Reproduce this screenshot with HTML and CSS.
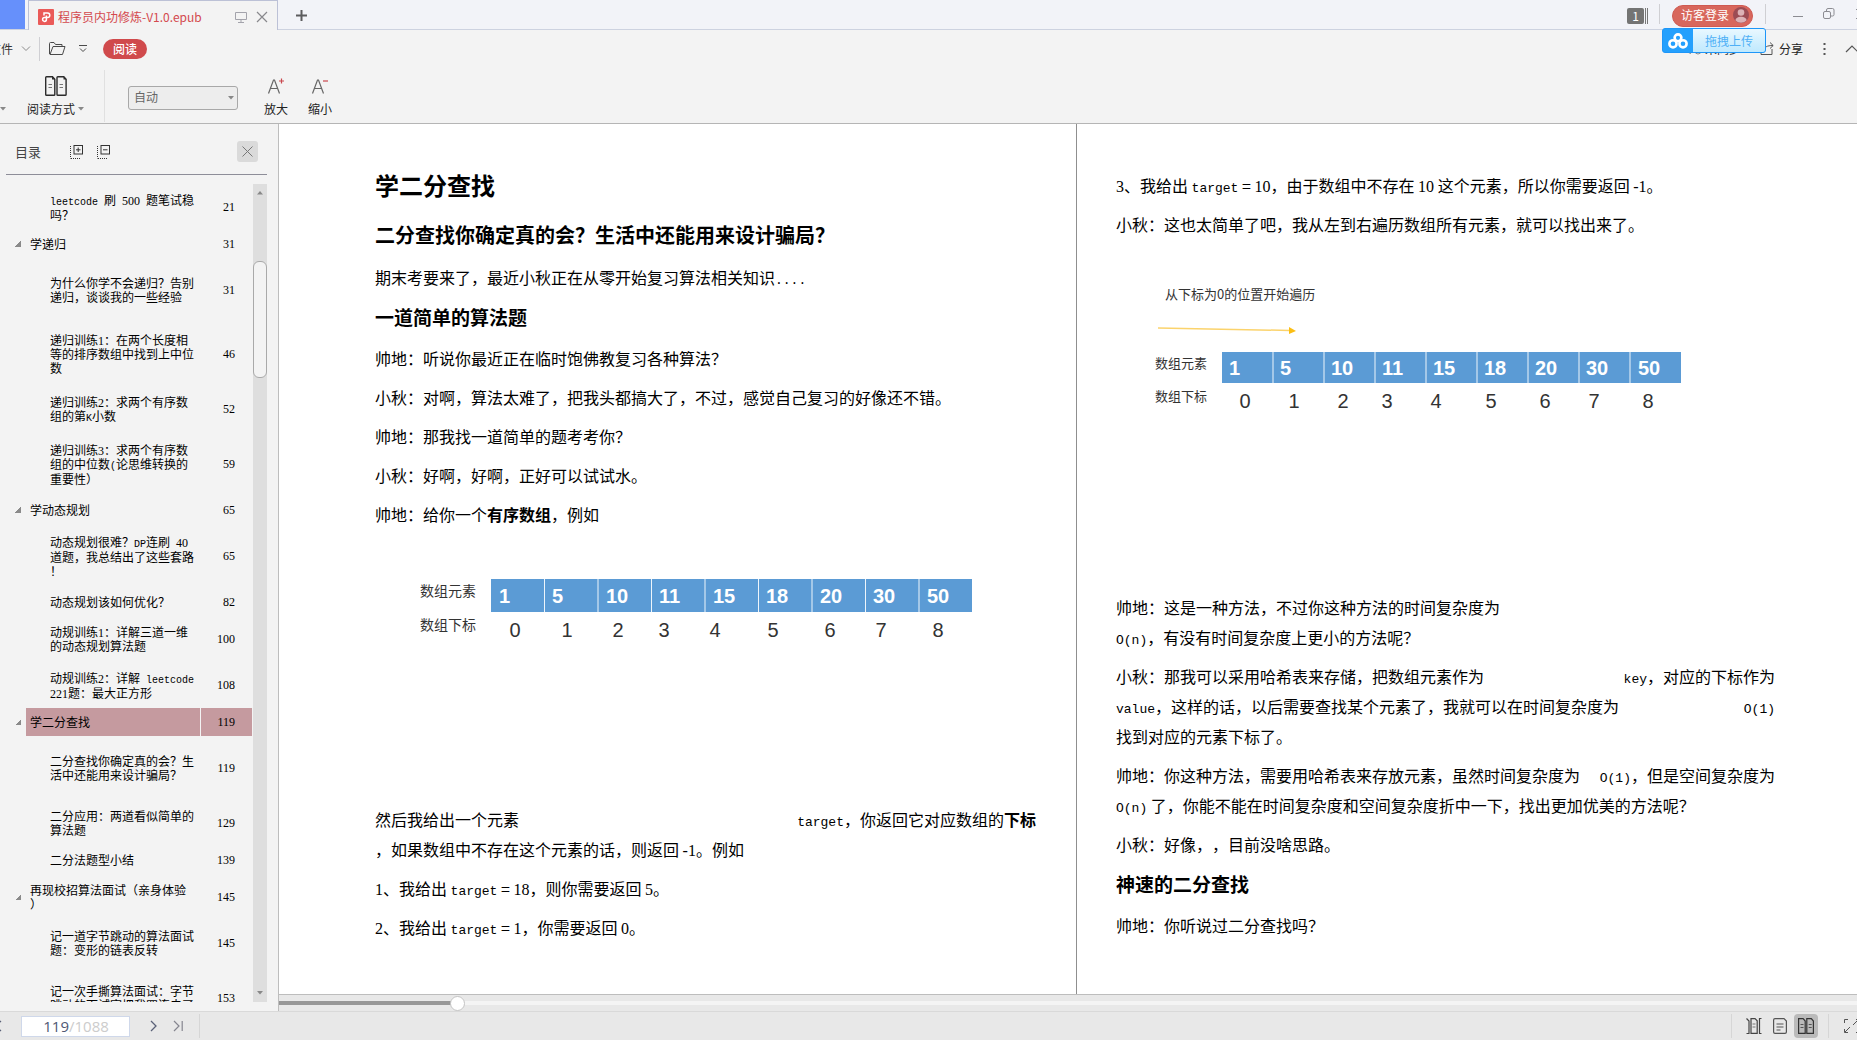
FILE: index.html
```html
<!DOCTYPE html>
<html lang="zh-CN">
<head>
<meta charset="utf-8">
<title>程序员内功修炼-V1.0.epub</title>
<link rel="stylesheet" href="styles.css">
</head>
<body>
<header class="titlebar">
  <div class="home-tab"></div>
  <div class="tab">
    <svg class="tab-logo" width="16" height="16" viewBox="0 0 16 16"><rect width="16" height="16" rx="1" fill="#ea5a58"/><path d="M6 6.500V4h3.500a2.300 2.300 0 1 1 0 4.600H6.500a1.900 1.900 0 1 0 1.900 1.900V6.500" fill="none" stroke="#fff" stroke-width="1.500"/></svg>
    <span class="tab-name">程序员内功修炼-V1.0.epub</span>
    <svg width="12" height="12" viewBox="0 0 12 12" fill="none" stroke="#a3a3ab"><path d="M.5 1.500h11v7H.5zM6 8.500v2.500M3 11.500h6"/></svg>
    <button class="plain" aria-label="关闭标签"><svg width="12" height="12" viewBox="0 0 12 12" stroke="#88888c" stroke-width="1.200"><path d="M1 1l10 10M11 1L1 11"/></svg></button>
  </div>
  <button class="plain new-tab" aria-label="新建标签"><svg width="13" height="13" viewBox="0 0 13 13" stroke="#5c5c5e" stroke-width="2"><path d="M6.500 1v11M1 6.500h11"/></svg></button>
  <div class="title-right">
    <span class="count"><b>1</b></span>
    <i class="rule"></i>
    <button class="login">访客登录<svg width="16" height="16" viewBox="0 0 16 16"><circle cx="8" cy="8" r="8" fill="#9c4c54"/><circle cx="8" cy="5.500" r="3.300" fill="#dcb2b6"/><path d="M2.500 13.500c0-5 11-5 11 0a8 8 0 0 1-11 0z" fill="#dcb2b6"/></svg></button>
    <i class="rule"></i>
    <button class="plain win-min" aria-label="最小化"><svg width="10" height="12" viewBox="0 0 10 12" stroke="#8c8c92"><path d="M0 8.500h10"/></svg></button>
    <button class="plain win-max" aria-label="还原"><svg width="12" height="12" viewBox="0 0 12 12" fill="none" stroke="#8c8c92"><rect x=".5" y="3.500" width="7" height="7" rx="1.500"/><path d="M3.500 3.500V2q0-1.500 1.500-1.500h4.500Q11 .5 11 2v4.500Q11 8 9.500 8h-2"/></svg></button>
    <button class="plain" aria-label="关闭"><svg width="12" height="12" viewBox="0 0 12 12" stroke="#8c8c92"><path d="M1 1l10 10M11 1L1 11"/></svg></button>
  </div>
</header>

<nav class="menubar">
  <button class="plain file">文件<svg width="10" height="6" viewBox="0 0 10 6" fill="none" stroke="#8a8a8a"><path d="M1 .5l4 4 4-4"/></svg></button>
  <i class="rule"></i>
  <button class="plain open" aria-label="打开"><svg width="17" height="13" viewBox="0 0 17 13" fill="none" stroke="#4a4a4a"><path d="M.5 12V1.500q0-1 1-1h3.500l1.500 2h6.500v2M1 12.500L4 4.500h12l-2.500 8z"/></svg></button>
  <button class="plain more" aria-label="更多"><svg width="8" height="8" viewBox="0 0 8 8" fill="none" stroke="#4a4a4a"><path d="M0 .5h8M1 3.500L4 6.500l3-3"/></svg></button>
  <button class="read">阅读</button>
  <div class="menu-right">
    <span class="sync"><svg width="14" height="12" viewBox="0 0 14 12" fill="none" stroke="#8a8a8a"><path d="M3 10.500a3 3 0 0 1 0-6 4 4 0 0 1 8 0"/><circle cx="10" cy="8" r="3"/></svg>未同步</span>
    <button class="plain share"><svg width="14" height="13" viewBox="0 0 14 13" fill="none" stroke="#555"><path d="M5 2.500H1v10h11V7M4 9c0-4 3-5.500 9-5.500M10 .5l3.200 3L10 6.500"/></svg>分享</button>
    <button class="plain dots" aria-label="菜单"><svg width="3" height="12" viewBox="0 0 3 12" fill="#555"><path d="M.5 0h2v2h-2zM.5 5h2v2h-2zM.5 10h2v2h-2z"/></svg></button>
    <button class="plain" aria-label="收起"><svg width="14" height="8" viewBox="0 0 14 8" fill="none" stroke="#555" stroke-width="1.200"><path d="M1 7l6-6 6 6"/></svg></button>
  </div>
</nav>
<button class="upload"><span class="upload-icon"><svg width="20" height="16" viewBox="0 0 20 16" fill="none" stroke="#fff" stroke-width="2.600"><circle cx="10" cy="4.800" r="3.400"/><circle cx="5" cy="10.800" r="3.600"/><circle cx="15" cy="10.800" r="3.600"/></svg></span><span class="upload-text">拖拽上传</span></button>

<section class="ribbon">
  <button class="plain edge" aria-label="更多"><svg width="6" height="4" viewBox="0 0 6 4" fill="#888"><path d="M0 0h6L3 3.500z"/></svg></button>
  <button class="plain tool mode"><svg width="22" height="20" viewBox="0 0 22 20" fill="none" stroke="#2c2c2c" stroke-width="1.400"><path d="M.7 1.500q0-.8.8-.8h6l2.300 2.600v15.200q0 .8-.8.8H1.500q-.8 0-.8-.8zM12 1.500q0-.8.8-.8h6l2.300 2.600v15.200q0 .8-.8.8h-7.500q-.8 0-.8-.8z"/><path d="M3.500 8.500H7M3.500 11.500H7M14.500 8.500H18M14.500 11.500H18" stroke="#777" stroke-width="1"/><path d="M7 .5l3 3H7zM18.500.5l3 3h-3z" fill="#2c2c2c" stroke="none"/></svg><span>阅读方式<svg width="6" height="4" viewBox="0 0 6 4" fill="#888"><path d="M0 0h6L3 3.500z"/></svg></span></button>
  <i class="rule tall"></i>
  <label class="zoom"><select aria-label="缩放"><option>自动</option></select><svg width="6" height="4" viewBox="0 0 6 4" fill="#888"><path d="M0 0h6L3 3.500z"/></svg></label>
  <button class="plain tool"><svg width="18" height="20" viewBox="0 0 18 20" fill="none" stroke="#666" stroke-width="1.200"><path d="M1.500 17.500L6.500 4h1l5 13.500M3.500 12.500h7.500"/><path d="M12 5h5M14.500 2.500v5" stroke="#c9474d"/></svg><span>放大</span></button>
  <button class="plain tool"><svg width="18" height="20" viewBox="0 0 18 20" fill="none" stroke="#666" stroke-width="1.200"><path d="M1.500 17.500L6.500 4h1l5 13.500M3.500 12.500h7.500"/><path d="M12 5h5" stroke="#c9474d"/></svg><span>缩小</span></button>
</section>

<main class="main">
  <aside class="sidebar">
    <div class="side-head">
      <span>目录</span>
      <button class="plain expand" aria-label="全部展开"><svg width="13" height="14" viewBox="0 0 13 14" fill="none" stroke="#333"><rect x="4" y=".5" width="8.500" height="8.500"/><path d="M6 4.800h4.500M8.200 2.500V7"/><path d="M.5 1v12.500M1 13.500h9" stroke-dasharray="1 1"/></svg></button>
      <button class="plain" aria-label="全部折叠"><svg width="13" height="14" viewBox="0 0 13 14" fill="none" stroke="#333"><rect x="4" y=".5" width="8.500" height="8.500"/><path d="M6 4.800h4.500"/><path d="M.5 1v12.500M1 13.500h9" stroke-dasharray="1 1"/></svg></button>
      <button class="side-close" aria-label="关闭目录"><svg width="11" height="11" viewBox="0 0 11 11" stroke="#777"><path d="M.5.5l10 10M10.500.5l-10 10"/></svg></button>
    </div>
    <div class="side-body">
      <ul class="tree">
        <li class="child h2"><a href="#"><i>leetcode </i>刷<i> </i><b>500</b><i> </i>题笔试稳<br>吗&#65311;</a><b>21</b></li>
        <li><a href="#">学递归</a><b>31</b></li>
        <li class="child h3"><a href="#">为什么你学不会递归&#65311;告别<br>递归&#65292;谈谈我的一些经验</a><b>31</b></li>
        <li class="child h3"><a href="#">递归训练<b>1</b>&#65306;在两个长度相<br>等的排序数组中找到上中位<br>数</a><b>46</b></li>
        <li class="child h2"><a href="#">递归训练<b>2</b>&#65306;求两个有序数<br>组的第<i>K</i>小数</a><b>52</b></li>
        <li class="child h3"><a href="#">递归训练<b>3</b>&#65306;求两个有序数<br>组的中位数<i>(</i>论思维转换的<br>重要性&#65289;</a><b>59</b></li>
        <li><a href="#">学动态规划</a><b>65</b></li>
        <li class="child h3"><a href="#">动态规划很难&#65311;<i>DP</i>连刷<i> </i><b>40</b><br>道题&#65292;我总结出了这些套路<br>&#65281;</a><b>65</b></li>
        <li class="child"><a href="#">动态规划该如何优化&#65311;</a><b>82</b></li>
        <li class="child h2"><a href="#">动规训练<b>1</b>&#65306;详解三道一维<br>的动态规划算法题</a><b>100</b></li>
        <li class="child h2"><a href="#">动规训练<b>2</b>&#65306;详解<i> leetcode</i><br><b>221</b>题&#65306;最大正方形</a><b>108</b></li>
        <li class="on"><a href="#">学二分查找</a><b>119</b></li>
        <li class="child h3"><a href="#">二分查找你确定真的会&#65311;生<br>活中还能用来设计骗局&#65311;</a><b>119</b></li>
        <li class="child h2"><a href="#">二分应用&#65306;两道看似简单的<br>算法题</a><b>129</b></li>
        <li class="child"><a href="#">二分法题型小结</a><b>139</b></li>
        <li class="h2"><a href="#">再现校招算法面试&#65288;亲身体验<br>&#65289;</a><b>145</b></li>
        <li class="child h2"><a href="#">记一道字节跳动的算法面试<br>题&#65306;变形的链表反转</a><b>145</b></li>
        <li class="child h3"><a href="#">记一次手撕算法面试&#65306;字节<br>跳动的面试官把我四连击了</a><b>153</b></li>
      </ul>
      <div class="scrollbar">
        <svg width="6" height="4" viewBox="0 0 6 4" fill="#888"><path d="M0 3.500h6L3 0z"/></svg>
        <div class="thumb"></div>
        <svg width="6" height="4" viewBox="0 0 6 4" fill="#888"><path d="M0 0h6L3 3.500z"/></svg>
      </div>
    </div>
  </aside>

  <div class="reader">
    <div class="pages">
      <article class="page left">
        <h1>学二分查找</h1>
        <h2>二分查找你确定真的会&#65311;生活中还能用来设计骗局&#65311;</h2>
        <p>期末考要来了&#65292;最近小秋正在从零开始复习算法相关知识<i>....</i></p>
        <h3>一道简单的算法题</h3>
        <p>帅地&#65306;听说你最近正在临时饱佛教复习各种算法&#65311;</p>
        <p>小秋&#65306;对啊&#65292;算法太难了&#65292;把我头都搞大了&#65292;不过&#65292;感觉自己复习的好像还不错。</p>
        <p>帅地&#65306;那我找一道简单的题考考你&#65311;</p>
        <p>小秋&#65306;好啊&#65292;好啊&#65292;正好可以试试水。</p>
        <p>帅地&#65306;给你一个<strong>有序数组</strong>&#65292;例如</p>
        <svg class="figure" width="660" height="275" viewBox="0 -2 660 275">
          <text class="cap14" x="45" y="65">数组元素</text>
          <text class="cap14" x="45" y="99">数组下标</text>
          <rect x="116" y="48" width="481" height="33" fill="#5b9bd5"/>
          <path d="M169.500 48v33M223 48v33M276.500 48v33M330 48v33M383.500 48v33M437 48v33M490.500 48v33M544 48v33" stroke="#eef5fb"/>
          <g class="cell"><text x="124" y="72">1</text><text x="177" y="72">5</text><text x="231" y="72">10</text><text x="284" y="72">11</text><text x="338" y="72">15</text><text x="391" y="72">18</text><text x="445" y="72">20</text><text x="498" y="72">30</text><text x="552" y="72">50</text></g>
          <g class="idx"><text x="140" y="106">0</text><text x="192" y="106">1</text><text x="243" y="106">2</text><text x="289" y="106">3</text><text x="340" y="106">4</text><text x="398" y="106">5</text><text x="455" y="106">6</text><text x="506" y="106">7</text><text x="563" y="106">8</text></g>
        </svg>
        <p><span class="split"><span>然后我给出一个元素</span><span><i>target</i>&#65292;你返回它对应数组的<strong>下标</strong></span></span>&#65292;如果数组中不存在这个元素的话&#65292;则返回 <b>-1</b>。例如</p>
        <p><b>1</b>、我给出 <i>target</i> = <b>18</b>&#65292;则你需要返回 <b>5</b>。</p>
        <p><b>2</b>、我给出 <i>target</i> = <b>1</b>&#65292;你需要返回 <b>0</b>。</p>
      </article>
      <article class="page right">
        <p><b>3</b>、我给出 <i>target</i> = <b>10</b>&#65292;由于数组中不存在 <b>10</b> 这个元素&#65292;所以你需要返回 <b>-1</b>。</p>
        <p>小秋&#65306;这也太简单了吧&#65292;我从左到右遍历数组所有元素&#65292;就可以找出来了。</p>
        <svg class="figure" width="620" height="353" viewBox="0 -1 620 353">
          <text class="cap13" x="49" y="59">从下标为0的位置开始遍历</text>
          <path d="M42 88l132 2.500" stroke="#fbd36c" stroke-width="1.500"/><path d="M173 87l7 4-7 3z" fill="#fbbe14"/>
          <text class="cap13" x="39" y="128">数组元素</text>
          <text class="cap13" x="39" y="161">数组下标</text>
          <rect x="106" y="112" width="459" height="31" fill="#5b9bd5"/>
          <path d="M157 112v31M208 112v31M259 112v31M310 112v31M361 112v31M412 112v31M463 112v31M514 112v31" stroke="#eef5fb"/>
          <g class="cell"><text x="113" y="135">1</text><text x="164" y="135">5</text><text x="215" y="135">10</text><text x="266" y="135">11</text><text x="317" y="135">15</text><text x="368" y="135">18</text><text x="419" y="135">20</text><text x="470" y="135">30</text><text x="522" y="135">50</text></g>
          <g class="idx"><text x="129" y="168">0</text><text x="178" y="168">1</text><text x="227" y="168">2</text><text x="271" y="168">3</text><text x="320" y="168">4</text><text x="375" y="168">5</text><text x="429" y="168">6</text><text x="478" y="168">7</text><text x="532" y="168">8</text></g>
        </svg>
        <p>帅地&#65306;这是一种方法&#65292;不过你这种方法的时间复杂度为<br><i>O(n)</i>&#65292;有没有时间复杂度上更小的方法呢&#65311;</p>
        <p><span class="split"><span>小秋&#65306;那我可以采用哈希表来存储&#65292;把数组元素作为</span><span><i>key</i>&#65292;对应的下标作为</span></span><span class="split"><span><i>value</i>&#65292;这样的话&#65292;以后需要查找某个元素了&#65292;我就可以在时间复杂度为</span><span><i>O(1)</i></span></span>找到对应的元素下标了。</p>
        <p><span class="split"><span>帅地&#65306;你这种方法&#65292;需要用哈希表来存放元素&#65292;虽然时间复杂度为</span><span><i>O(1)</i>&#65292;但是空间复杂度为</span></span><i>O(n)</i> 了&#65292;你能不能在时间复杂度和空间复杂度折中一下&#65292;找出更加优美的方法呢&#65311;</p>
        <p>小秋&#65306;好像&#65292;&#65292;目前没啥思路。</p>
        <h3>神速的二分查找</h3>
        <p>帅地&#65306;你听说过二分查找吗&#65311;</p>
      </article>
    </div>
    <div class="progress"><input type="range" min="0" max="1088" value="119" aria-label="阅读进度"></div>
  </div>
</main>

<footer class="status">
  <button class="plain prev" aria-label="上一页"><svg width="8" height="14" viewBox="0 0 8 14" fill="none" stroke="#5a6178" stroke-width="1.300"><path d="M7 2L1.500 7 7 12"/></svg></button>
  <label class="pager"><input value="119" aria-label="页码"><span>/1088</span></label>
  <button class="plain next" aria-label="下一页"><svg width="7" height="12" viewBox="0 0 7 12" fill="none" stroke="#5a6178" stroke-width="1.300"><path d="M1 1l5 5-5 5"/></svg></button>
  <button class="plain last" aria-label="末页"><svg width="10" height="12" viewBox="0 0 10 12" fill="none" stroke="#85858f" stroke-width="1.200"><path d="M1 1l5 5-5 5M9.200 1v10"/></svg></button>
  <i class="rule"></i>
  <div class="views">
    <i class="rule"></i>
    <button class="plain v1" aria-label="连续"><svg width="16" height="16" viewBox="0 0 16 16" fill="none" stroke="#444" stroke-width="1.200"><path d="M.5.5L3 3v12.500H.5M15.500.5h-2v15h2M5 .6h4l2.200 2.200v12.600H5z"/><path d="M6.500 6h3M6.500 9h3" stroke="#777"/></svg></button>
    <button class="plain v2" aria-label="单页"><svg width="14" height="16" viewBox="0 0 14 16" fill="none" stroke="#555" stroke-width="1.200"><path d="M2 .6h9l2.400 2.400v11q0 1.400-1.400 1.400H2Q.6 15.400.6 14V2Q.6.6 2 .6zM3.500 6h7M3.500 9h7M3.500 12h4"/></svg></button>
    <button class="plain v3" aria-label="双页"><svg width="16" height="16" viewBox="0 0 16 16" fill="none" stroke="#333" stroke-width="1.200"><path d="M.6.6h4.500L7.200 3v12.400H.6zM8.800.6h4.500L15.400 3v12.400H8.800z"/><path d="M2.500 6.500h3M2.500 9.500h3M10.700 6.500h3M10.700 9.500h3" stroke="#555"/></svg></button>
    <i class="rule"></i>
    <button class="plain full" aria-label="全屏"><svg width="16" height="14" viewBox="0 0 16 14" fill="none" stroke="#555"><path d="M.5 4V.5H4M12 .5h3.500V4M.5 10v3.500H4M12 13.500h3.500V10M9 6l5-5M1 13l5-5"/></svg></button>
  </div>
</footer>
</body>
</html>
```
FILE: styles.css
```css
* { box-sizing: border-box; }
body {
  margin: 0;
  height: 100vh;
  display: flex;
  flex-direction: column;
  overflow: hidden;
  position: relative;
  background: #f3f3f3;
  color: #333;
  font: 12px/18px "Noto Sans CJK SC", sans-serif;
  text-spacing-trim: space-all;
}
svg { display: block; flex: none; }
button, input, select { font: inherit; color: inherit; }
.plain { border: 0; padding: 0; background: none; display: flex; align-items: center; flex: none; }
.rule { width: 1px; height: 20px; background: #cfcfd3; flex: none; }

/* title bar */
.titlebar { display: flex; flex: none; height: 30px; background: #f2f3f8; border-bottom: 1px solid #cdd2e0; }
.home-tab { width: 25px; background: #6690fb; }
.tab {
  width: 250px; height: 30px; margin-left: 3px; padding: 2px 9px 0 9px;
  display: flex; align-items: center; gap: 15px;
  border: 1px solid #bcc1d6; border-bottom: 0; background: #f3f3f3;
}
.tab-name { color: #d4494e; flex: 1; margin-left: -11px; white-space: nowrap; }
.tab .plain { margin-left: -6px; }
.new-tab { margin: 2px 0 0 17px; }
.title-right { margin-left: auto; display: flex; align-items: center; padding-bottom: 2px; }
.count { width: 21px; height: 16px; border-right: 3px double #777; margin: 4px 11px 0 0; padding-right: 1px; }
.count b { display: block; height: 16px; line-height: 16px; border-radius: 2px; background: #747474; color: #fff; font-weight: 400; text-align: center; }
.login {
  display: flex; align-items: center; gap: 4px; height: 22px; margin: 4px 12px 0;
  padding: 0 3px 2px 8px; border: 1px solid #cf5a52; border-radius: 11px; background: #d8675c; color: #fff;
}
.win-min { margin: 0 20px 0 27px; }
.win-max { margin-right: 20px; }
.title-right > .plain:last-child { margin-right: -10px; }

/* menu row */
.menubar { display: flex; flex: none; align-items: center; height: 37px; }
.file { margin-left: -11px; gap: 8px; }
.menubar > .rule { height: 24px; margin: 0 9px 0 8px; }
.more { margin: 0 16px 0 13px; }
.read { height: 20px; width: 44px; padding: 0; border: 0; border-radius: 10px; background: #d04a4c; color: #fff; font-weight: 500; line-height: 18px; }
.menu-right { margin-left: auto; display: flex; align-items: center; margin-right: -2px; }
.sync { display: flex; gap: 3px; align-items: center; margin-right: 19px; }
.share { gap: 5px; color: #222; }
.dots { margin: 0 19px 0 20px; }
.upload {
  position: absolute; top: 28px; right: 91px; width: 104px; height: 25px; padding: 0;
  display: flex; border: 1px solid #1e96f8; border-radius: 3px; overflow: hidden; background: #24a0fd;
}
.upload-icon { width: 30px; height: 23px; display: grid; place-items: center; }
.upload-text { flex: 1; height: 23px; line-height: 23px; color: #4fb0f6; background: linear-gradient(#e9f8ff, #bfe9fe); }

/* ribbon */
.ribbon { display: flex; flex: none; align-items: center; height: 57px; padding-top: 2px; border-bottom: 1px solid #b5b5b5; }
.edge { margin: 25px 21px 0 0; }
.tool { flex-direction: column; gap: 5px; margin-right: 20px; color: #222; line-height: 16px; }
.tool span { display: flex; align-items: center; gap: 3px; }
.mode { margin: 0 20px 0 0; }
.tall { height: 52px; background: #e0e0e0; }
.zoom { display: flex; align-items: center; margin: 3px 30px 0 23px; }
.zoom select { appearance: none; width: 110px; height: 24px; padding: 0 5px 2px; border: 1px solid #a8a8a8; border-radius: 3px; background: #ededed; color: #666; }
.zoom svg { margin-left: -10px; }

/* contents panel */
.main { display: flex; flex: 1; min-height: 0; }
.sidebar { width: 279px; flex: none; display: flex; flex-direction: column; padding: 0 11px 9px 0; border-right: 1px solid #bdbdbd; }
.side-head { display: flex; align-items: center; height: 51px; margin-left: 6px; padding: 5px 9px 0 9px; border-bottom: 1px solid #8d8d98; font-size: 13px; color: #444; }
.expand { margin: 0 14px 0 29px; }
.side-close { width: 21px; height: 21px; margin-left: auto; padding: 0; display: grid; place-items: center; border: 0; border-radius: 3px; background: #dadada; }
.side-body { display: flex; flex: 1; min-height: 0; margin-top: 9px; overflow: hidden; }
.tree { flex: 1; margin: 0; padding: 0 1px 0 15px; list-style: none; line-height: 14px; color: #000; }
.tree li { display: flex; height: 28px; align-items: center; }
.tree li::before { content: ""; width: 6px; height: 6px; margin-right: 5px; background: linear-gradient(135deg, transparent 50%, #8a8a8a 50%); flex: none; }
.tree .child::before { visibility: hidden; }
.tree .h2 { height: 46px; }
.tree .h3 { height: 64px; }
.tree a { flex: 1; height: 100%; padding-left: 4px; display: block; align-content: center; color: #000; text-decoration: none; white-space: nowrap; }
.tree .child a { padding-left: 24px; }
.tree i, .tree b { font-style: normal; font-weight: 400; }
.tree i { font-family: "Liberation Mono", monospace; font-size: 10px; line-height: 10px; }
.tree b { font-family: "Liberation Serif", serif; line-height: 10px; }
.tree li > b { width: 51px; height: 100%; margin-left: 1px; padding-right: 17px; text-align: right; align-content: center; flex: none; }
.tree .on a, .tree .on > b { background: #c59a9f; }
.scrollbar { width: 14px; display: flex; flex-direction: column; align-items: center; padding: 7px 0; background: #dedede; }
.thumb { width: 14px; height: 117px; margin: 66px 0 auto; border: 1px solid #a9a9a9; border-radius: 6px; background: #f3f3f3; }

/* reader */
.reader { flex: 1; min-width: 0; display: flex; flex-direction: column; background: #e8e8e8; }
.pages { flex: 1; min-height: 0; display: grid; grid-template-columns: 797fr 781fr; background: #fff; border-bottom: 1px solid #bdbdbd; }
.page { padding: 46px 40px 0 96px; color: #000; font-size: 16px; line-height: 30px; white-space: nowrap; min-width: 0; }
.page.right { padding: 46px 82px 0 39px; border-left: 1px solid #8f8f8f; }
.page h1, .page h2, .page h3 { margin: 0; line-height: 30px; font-weight: 700; }
.page h1 { font-size: 24px; }
.page h2 { font-size: 20px; margin: 20px 0 12px; }
.page h3 { font-size: 19px; margin: 10px 0 11px; }
.page p { margin: 0; }
.page p + p { margin-top: 9px; }
.page i, .page b { font-style: normal; font-weight: 400; line-height: 16px; }
.page i { font-family: "Liberation Mono", monospace; font-size: 13px; }
.page b { font-family: "Liberation Serif", serif; }
.split { display: flex; justify-content: space-between; }
.figure { overflow: visible; }
.cap14 { font-size: 14px; fill: #333; }
.cap13 { font-size: 13px; fill: #333; }
.cell { font: 700 20px "Liberation Sans", sans-serif; fill: #fff; }
.idx { font: 20px "Liberation Sans", sans-serif; fill: #333; text-anchor: middle; }
.progress { height: 16px; flex: none; display: flex; align-items: center; }
.progress input { appearance: none; width: 100%; height: 4px; margin: 0; background: linear-gradient(90deg, #979797 11%, #f4f4f4 11%); }
.progress input::-webkit-slider-thumb { appearance: none; width: 15px; height: 15px; border: 1px solid #c4c4c4; border-radius: 50%; background: #fff; }

/* status bar */
.status { display: flex; flex: none; align-items: center; height: 29px; background: #e8e8e8; border-top: 1px solid #d9d9d9; }
.prev { margin: 0 19px 0 -6px; }
.pager { width: 109px; height: 21px; display: flex; border: 1px solid #cfd8ea; background: #fff; font: 15px/19px "Open Sans", sans-serif; color: #ccc; }
.pager input { width: 47px; padding: 0; border: 0; background: none; text-align: right; color: #4f5874; }
.next { margin: 0 16px 0 20px; }
.last { margin-right: 16px; }
.status .rule { height: 24px; background: #d6d6d6; }
.views { margin-left: auto; margin-right: -3px; display: flex; align-items: center; }
.v1 { margin: 0 11px 0 14px; }
.v3 { width: 24px; height: 24px; margin: 0 10px 0 7px; justify-content: center; border-radius: 4px; background: #bababa; }
.full { margin-left: 15px; }
```
